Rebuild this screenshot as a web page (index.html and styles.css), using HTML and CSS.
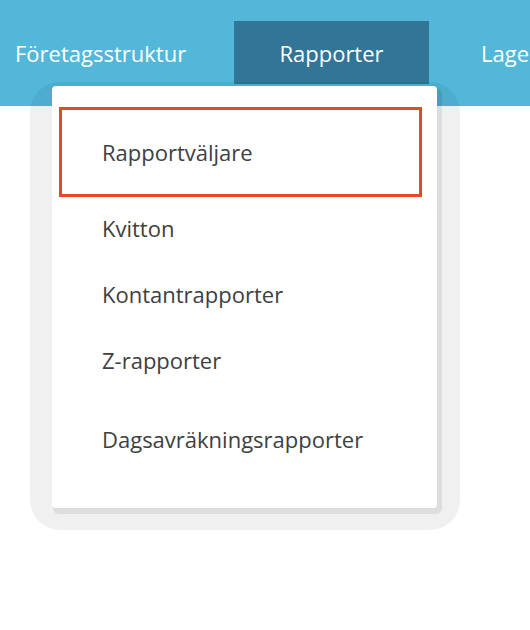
FILE: index.html
```html
<!DOCTYPE html>
<html lang="sv">
<head>
  <meta charset="UTF-8">
  <title>Rapporter</title>
  <link rel="stylesheet" href="styles.css">
</head>
<body>
  <header class="topbar">
    <nav class="nav">
      <a class="nav-item first">Företagsstruktur</a>
      <a class="nav-item active">Rapporter</a>
      <a class="nav-item last">Lager</a>
    </nav>
  </header>

  <div class="dropdown-shade">
    <div class="dropdown">
      <ul class="menu">
        <li class="menu-item selected">Rapportväljare</li>
        <li class="menu-item">Kvitton</li>
        <li class="menu-item">Kontantrapporter</li>
        <li class="menu-item">Z-rapporter</li>
        <li class="menu-item spaced">Dagsavräkningsrapporter</li>
      </ul>
    </div>
  </div>
</body>
</html>
```

FILE: styles.css
```css
* {
  margin: 0;
  padding: 0;
  box-sizing: border-box;
}
body {
  width: 530px;
  height: 630px;
  overflow: hidden;
  background: #ffffff;
  font-family: "Open Sans", "Noto Sans", sans-serif;
  position: relative;
}

.topbar {
  height: 106px;
  background-color: #53b7d9;
  padding-top: 21px;
}
.nav {
  display: flex;
  height: 63px;
  white-space: nowrap;
}
.nav-item {
  display: flex;
  flex-shrink: 0;
  align-items: center;
  color: #ffffff;
  font-size: 22px;
}
.nav-item.first {
  padding-left: 15px;
  width: 234px;
}
.nav-item.active {
  width: 195px;
  justify-content: center;
  background-color: #327596;
}
.nav-item.last {
  padding-left: 52px;
}

/* menu that drops from the Rapporter tab */
.dropdown-shade {
  position: absolute;
  left: 30px;
  top: 82px;
  width: 430px;
  height: 448px;
  padding: 4px 23px 22px 22px;
  border-radius: 30px;
  background: rgba(0, 0, 0, 0.06);
}
.dropdown {
  height: 100%;
  background: #ffffff;
  border-radius: 4px;
  box-shadow: 3px 4px 0 2px rgba(0, 0, 0, 0.08);
}
.menu {
  list-style: none;
  padding-top: 21px;
}
.menu-item {
  color: #404040;
  font-size: 22px;
  line-height: 28px;
  padding: 17px 0 21px 50px;
}
.menu-item.selected {
  margin: 0 15px 0 7px;
  height: 90px;
  padding: 0 0 0 40px;
  display: flex;
  align-items: center;
  border: 3px solid #e8472a;
}
.menu-item.spaced {
  margin-top: 13px;
}
```
